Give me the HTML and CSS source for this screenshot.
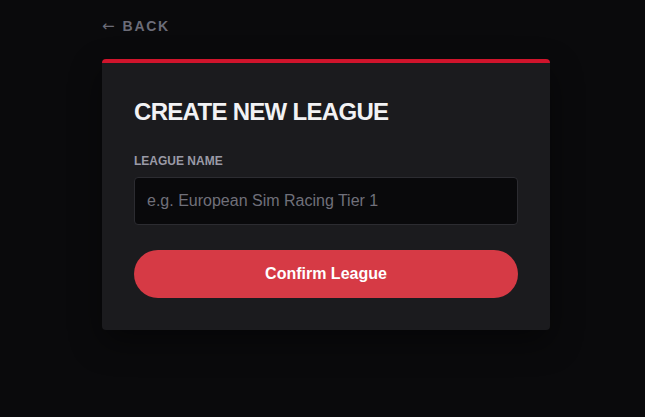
FILE: index.html
```html
<!DOCTYPE html>
<html lang="en">
<head>
<meta charset="utf-8">
<title>Create New League</title>
<link rel="stylesheet" href="styles.css">
</head>
<body>
<main class="page">
  <a class="back" href="#"><span class="back-arrow">←</span><span class="back-text">BACK</span></a>
  <section class="card">
    <h1 class="title">CREATE NEW LEAGUE</h1>
    <form class="form">
      <label class="label" for="league">LEAGUE NAME</label>
      <input class="input" id="league" type="text" placeholder="e.g. European Sim Racing Tier 1">
      <button class="btn" type="button">Confirm League</button>
    </form>
  </section>
</main>
</body>
</html>
```
FILE: styles.css
```css
* { box-sizing: border-box; }
html, body { margin: 0; padding: 0; }
body {
  background: #0a0a0c;
  font-family: "Liberation Sans", Arial, sans-serif;
  color: #f0f0f2;
  width: 645px;
  height: 417px;
  overflow: hidden;
}
.page {
  padding: 16px 0 0 102px;
}
.back {
  display: flex;
  align-items: center;
  gap: 8px;
  height: 20px;
  margin-bottom: 23px;
  text-decoration: none;
  color: #6c6c78;
  font-size: 14px;
  line-height: 20px;
}
.back-arrow {
  font-family: "DejaVu Sans", sans-serif;
  font-size: 15px;
  font-weight: normal;
}
.back-text {
  font-weight: bold;
  letter-spacing: 1.7px;
}
.card {
  width: 448px;
  background: #1b1b1e;
  border-top: 4px solid #d0142c;
  border-radius: 4px;
  padding: 33px 32px 32px;
  box-shadow: 0 12px 32px rgba(0, 0, 0, 0.45);
}
.title {
  margin: 0 0 25px;
  font-size: 24px;
  line-height: 32px;
  font-weight: bold;
  letter-spacing: -0.7px;
  color: #f2f2f4;
}
.form {
  display: flex;
  flex-direction: column;
}
.label {
  font-size: 12px;
  line-height: 16px;
  font-weight: bold;
  color: #9a9aa6;
  margin-bottom: 8px;
}
.input {
  height: 48px;
  background: #09090b;
  border: 1px solid #2c2c31;
  border-radius: 4px;
  padding: 0 12px;
  font-family: "Liberation Sans", Arial, sans-serif;
  font-size: 16px;
  color: #e8e8ea;
  outline: none;
}
.input::placeholder { color: #70707a; }
.btn {
  margin-top: 25px;
  height: 48px;
  border: none;
  border-radius: 24px;
  background: #d63a45;
  color: #ffffff;
  font-family: "Liberation Sans", Arial, sans-serif;
  font-size: 16px;
  font-weight: bold;
  cursor: pointer;
}
```
